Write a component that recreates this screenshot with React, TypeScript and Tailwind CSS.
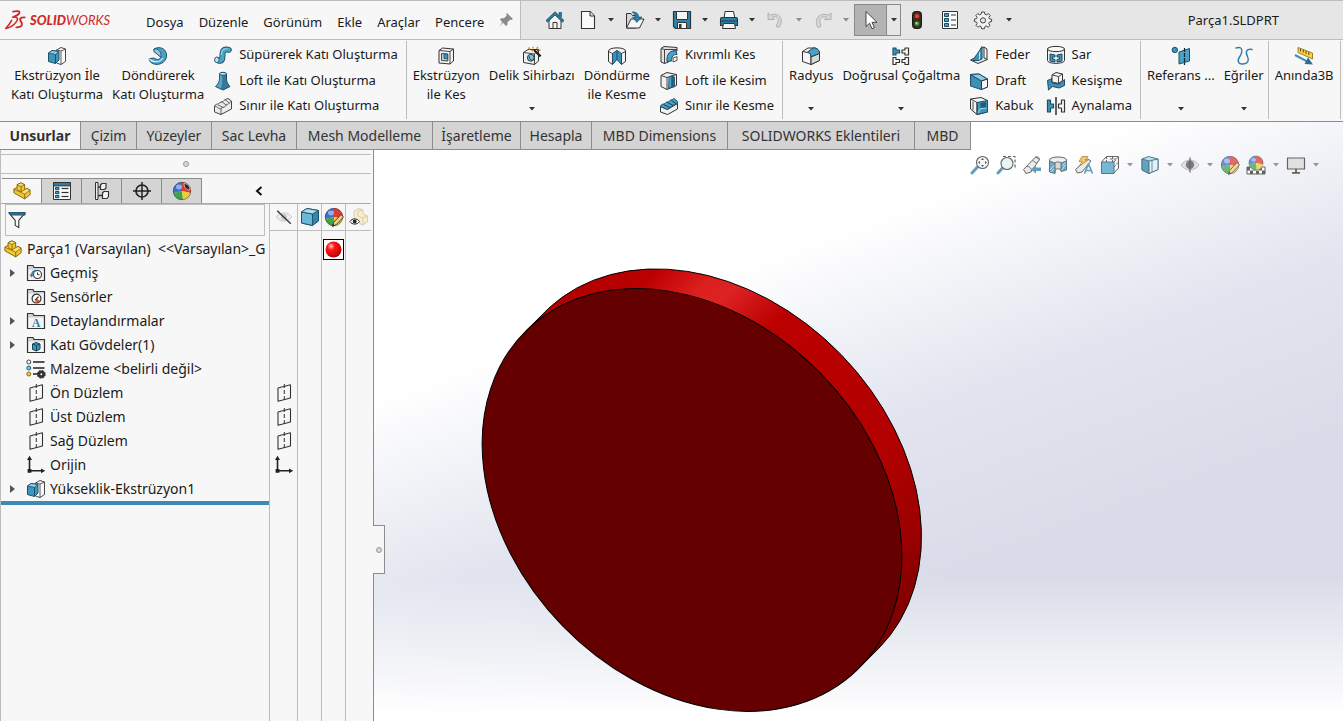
import React from "react";
import { clsx } from "clsx";

type IconType = React.FC;

const Svg: React.FC<{ children: React.ReactNode; className?: string }> = ({ children, className = "size-5" }) => (
  <svg viewBox="0 0 20 20" fill="none" stroke="#333" strokeLinejoin="round" className={clsx("shrink-0", className)} aria-hidden="true">
    {children}
  </svg>
);

const Caret: React.FC<{ className?: string }> = ({ className = "text-[#333]" }) => (
  <svg viewBox="0 0 6 4" className={clsx("w-1.5 h-1 shrink-0", className)} aria-hidden="true">
    <path d="M0 0H6L3 3.5Z" fill="currentColor" />
  </svg>
);

// ---------- Logo ----------
const Logo = () => (
  <div className="flex items-center gap-1 text-[#cf2a27]">
    <svg viewBox="0 0 21 20" fill="none" stroke="currentColor" strokeLinecap="round" className="w-[21px] h-5" aria-hidden="true">
      <path d="M8 1.6C11 .8 15.5.6 14.4 3C13.4 5 11 5.9 9 6.6" strokeWidth="1.7" />
      <path d="M7.5 7.2C12.5 6.6 13.6 8.4 11.4 11.6C8.8 15.3 4.6 17.8.9 18.4C3.4 15.8 5.2 13 6.6 10.4" strokeWidth="1.6" />
      <path d="M19.6 7.4C15.6 7.2 14.2 8.6 15.6 10.9C17.8 14 18.2 17 11.4 17.4" strokeWidth="1.9" />
    </svg>
    <span className="font-['Lato'] italic text-[13px] leading-5">
      <b className="font-black">SOLID</b>
      <span className="font-normal">WORKS</span>
    </span>
  </div>
);

// ---------- Quick access icons ----------
const HomeIcon = () => (
  <Svg>
    <path d="M4 10V18.5H16V10L10 4Z" fill="#f4f4f4" />
    <path d="M8 18.5V12.5H12V18.5" />
    <path d="M14 2.5H16.5V7L14 5Z" fill="#2b7ea6" stroke="#1d4e66" strokeWidth=".7" />
    <path d="M1 10.6L10 1.8L19 10.6L17.4 12L10 5L2.6 12Z" fill="#2b7ea6" stroke="#173f54" strokeWidth=".8" />
  </Svg>
);

const NewIcon = () => (
  <Svg>
    <path d="M3.5 1.5H12L16.5 6V18.5H3.5Z" fill="#fafafa" strokeWidth="1.1" />
    <path d="M12 1.5V6H16.5" fill="#ddd" />
  </Svg>
);

const OpenIcon = () => (
  <Svg>
    <path d="M1.5 18V3.5H6L7.5 5.5H11V18Z" fill="#d7d7d7" />
    <path d="M1.5 18L6 9H19L14.5 18Z" fill="#f6f6f6" />
    <path d="M7 2C11 1.6 13.6 3.6 13.8 7H17L11.8 12.5L7.6 7H10.4C10.3 5 9.2 3.2 7 2Z" fill="#2b7ea6" stroke="#174a63" strokeWidth=".6" />
  </Svg>
);

const SaveIcon = () => (
  <Svg>
    <path d="M1.5 1.5H18.5V18.5H3.5L1.5 16.5Z" fill="#2b84ad" strokeWidth="1.2" />
    <path d="M4.5 1.5H15.5V9.5H4.5Z" fill="#f4f4f4" />
    <path d="M5.5 12.5H14.5V18.5H5.5Z" fill="#f4f4f4" />
    <path d="M7 14H9.5V18H7Z" fill="#333" stroke="none" />
  </Svg>
);

const PrintIcon = () => (
  <Svg>
    <path d="M5 9L6 1.5H14.5L16 9Z" fill="#fafafa" />
    <path d="M1.5 9Q1.5 7.5 3 7.5H17Q18.5 7.5 18.5 9V15.5H1.5Z" fill="#2b7ea6" strokeWidth="1.1" />
    <path d="M2 11H18" stroke="#173f54" />
    <path d="M4.5 13.5H15.5L16.5 18.5H3.5Z" fill="#f4f4f4" />
  </Svg>
);

const UndoIcon = () => (
  <Svg>
    <path d="M2 3V9.5H8.5L6.4 7.4C10 5.4 14 8 11.6 13L10 16.5L13 17.5C19 9.5 13 1.5 4.4 5.2Z" fill="#d6d6d6" stroke="#ababab" strokeWidth=".9" />
  </Svg>
);

const RedoIcon = () => (
  <Svg>
    <path d="M18 3V9.5H11.5L13.6 7.4C10 5.4 6 8 7 13L8 16.5L5 17.5C0 9.5 7 1.5 15.6 5.2Z" fill="#d6d6d6" stroke="#ababab" strokeWidth=".9" />
  </Svg>
);

const CursorIcon = () => (
  <Svg>
    <path d="M5 1.5V16.5L8.6 13.2L11 18.7L13.4 17.6L11 12.3H16Z" fill="#fff" strokeWidth=".9" />
  </Svg>
);

const TrafficIcon = () => (
  <Svg>
    <rect x="5.5" y="1.5" width="9" height="17" rx="3" fill="#2f2f24" stroke="#161616" />
    <circle cx="10" cy="6.2" r="2.7" fill="#e0402a" stroke="#6e1a10" />
    <circle cx="10" cy="13.6" r="2.7" fill="#4f9d3a" stroke="#1f4a15" />
    <circle cx="9.4" cy="13" r=".9" fill="#b6e59f" stroke="none" />
  </Svg>
);

const ListIcon = () => (
  <Svg>
    <rect x="2.5" y="1.5" width="15" height="17" fill="#fafafa" />
    {[3.5, 8.5, 13.5].map((y) => (
      <g key={y}>
        <rect x="4.5" y={y} width="4" height="3" fill="#4aa3c7" stroke="#174a63" />
        <path d={`M11 ${y + 1.5}H16`} />
      </g>
    ))}
  </Svg>
);

const GearIcon = () => (
  <Svg>
    <path
      d="M8.6 2H11.4L11.9 4.2L13.4 4.9L15.3 3.6L17.2 5.5L15.9 7.4L16.4 8.8L18.6 9.3V11.6L16.4 12.1L15.8 13.5L17 15.4L15.2 17.2L13.3 16L11.9 16.6L11.4 18.7H8.6L8.1 16.6L6.7 16L4.8 17.2L3 15.4L4.2 13.5L3.6 12.1L1.4 11.6V9.2L3.6 8.7L4.2 7.4L2.9 5.5L4.8 3.6L6.7 4.9L8.1 4.2Z"
      fill="#f2f2f2"
      stroke="#444"
    />
    <circle cx="10" cy="10.4" r="2.6" fill="#e6e6e6" stroke="#444" />
  </Svg>
);

const PinIcon = () => (
  <svg viewBox="0 0 16 16" className="size-4 shrink-0" aria-hidden="true">
    <path d="M9 1L15 7L13.6 8L12.4 7.4L9.6 10L9.4 13L8 14L5 10.8L1 14.8L4.2 10.2L2 7.4L3.2 6.2L6 6.3L8.8 3.6L8.2 2.2Z" fill="#8b8b8b" />
  </svg>
);

// ---------- Ribbon icons ----------
const ExtrudeIcon = () => (
  <Svg>
    <path d="M9.5 4L14 1.5L18.5 3V15.5L14 18.5L9.5 17Z" fill="#fafafa" strokeWidth=".9" />
    <path d="M14 18.5V5L18.5 3M14 5L9.5 4" strokeWidth=".8" />
    <path d="M1.5 7L5 4.5L12 5.5V14L8.5 17.5L1.5 15.5Z" fill="#3c97bf" stroke="#1d4e66" />
    <path d="M1.5 7L8.5 8.5L12 5.5L5 4.5Z" fill="#8fcbe2" stroke="#1d4e66" strokeWidth=".8" />
    <path d="M8.5 8.5V17.5" stroke="#1d4e66" />
  </Svg>
);

const RevolveIcon = () => (
  <Svg>
    <path d="M6 3C12-.5 19 3 18.5 10C18 17.5 9 20.5 3.5 16.8C1.6 15.5 1 14 1.2 12.6L6.5 12C8 14 11.5 14 13 11.2L6 5.5Z" fill="#4aa3c7" stroke="#1d4e66" />
    <path d="M6 3C10 2.5 13.5 5 13 11.2L6 5.5Z" fill="#8fcbe2" stroke="#1d4e66" strokeWidth=".8" />
    <path d="M1.2 12.6C4 16.4 11 17.4 15 12" stroke="#d9f0f9" strokeWidth="1.1" />
  </Svg>
);

const SweepIcon = () => (
  <Svg>
    <path d="M4.5 15C9.5 17.5 9.5 13.5 9.5 10C9.5 5 11.5 3.8 15.8 4.8" stroke="#1d4e66" strokeWidth="6" strokeLinecap="round" />
    <path d="M4.5 15C9.5 17.5 9.5 13.5 9.5 10C9.5 5 11.5 3.8 15.8 4.8" stroke="#4aa3c7" strokeWidth="4.2" strokeLinecap="round" />
    <path d="M8.4 10C8 5.5 10 3.4 14.6 3.8" stroke="#9bd3e8" strokeWidth="1.2" />
    <ellipse cx="3.8" cy="14.8" rx="2.2" ry="2.8" fill="#bfe3f0" stroke="#1d4e66" strokeWidth=".8" />
  </Svg>
);

const LoftIcon = () => (
  <Svg>
    <path d="M6.5 2.5V8C6.5 11.5 4 14 2.5 15.5L10 19L17 15.5C15.5 14 13.5 11.5 13.5 8V2.5Z" fill="#35799c" stroke="#1d4e66" />
    <path d="M6.8 3V8C6.8 12 4.5 14 3 15.3L8 17.6C9.3 13 9.5 8 9.4 3Z" fill="#5ca5c6" stroke="none" />
    <ellipse cx="10" cy="2.8" rx="3.5" ry="1.5" fill="#bfe3f0" stroke="#1d4e66" />
  </Svg>
);

const BoundaryIcon = () => (
  <Svg>
    <path d="M1.5 10.5C2 7.5 5 8.5 6 7.5C7 6 9 6 10 5.5C11 4 12.5 3.5 15 2.5L18.5 5V13L8 18.5L1.5 16Z" fill="#ececec" stroke="#444" />
    <path d="M1.5 10.5C4 9.5 5 13 8 13C8.5 10.5 11 12 12 10.5C13 8 15.5 9 18.5 5M8 13V18.5M5 9L10.5 11.5M9 6L14 9.5M12.5 4L16.5 7" stroke="#555" strokeWidth=".9" />
  </Svg>
);

const ExtrudeCutIcon = () => (
  <Svg>
    <path d="M3 4.5L6.5 2L17.5 3V15L14 18L3 17Z" fill="#f3f3f3" />
    <path d="M3 4.5L14 5.5V18M14 5.5L17.5 3" strokeWidth=".9" />
    <path d="M5.5 7.5L11.8 8V15L5.5 14.5Z" fill="#cfcfcf" strokeWidth=".9" />
    <path d="M8 7.9L11.6 8.2V12.8L8 12.5Z" fill="#3c97bf" stroke="#1d4e66" strokeWidth=".8" />
  </Svg>
);

const HoleWizardIcon = () => (
  <Svg>
    <path d="M1.5 6.5L6 3.5H16.5V15L12.5 18.5L1.5 16.5Z" fill="#f0f0f0" />
    <path d="M1.5 6.5L12.5 8V18.5M12.5 8L16.5 3.5" strokeWidth=".9" />
    <circle cx="8.8" cy="11.8" r="3.4" fill="#7cc3de" />
    <path d="M7.4 10.2A3 3 0 0 0 11 14" stroke="#1d4e66" />
    <path d="M12 4L18.6 10.4" stroke="#222" strokeWidth="2.4" />
    <path d="M6.5 1.5L8 3.5M11 .8V2.6M16 1L14.6 2.8M18.6 3.6L16.8 4.6M9.5 5.2L11 4.4" stroke="#e2902c" strokeWidth="1.5" />
  </Svg>
);

const RevolveCutIcon = () => (
  <Svg>
    <path d="M1.5 5C1.5.8 18.5.8 18.5 5V15.5L14.5 18.5H5.5L1.5 15.5Z" fill="#f3f3f3" stroke="none" />
    <path d="M5.5 18.5L1.5 15.5V5C1.5.8 18.5.8 18.5 5V15.5L14.5 18.5" />
    <path d="M5.5 18.5V7.5L10 4.5L14.5 7.5V18.5L10 13.5Z" fill="#3c8fb5" stroke="#1d4e66" />
    <path d="M10 4.5V13.5" stroke="#1d4e66" />
    <path d="M1.5 5.5L5.5 7.5M18.5 5.5L14.5 7.5" strokeWidth=".9" />
  </Svg>
);

const SweptCutIcon = () => (
  <Svg>
    <path d="M2 3.5L5 1.5L18 2.5V6H15C11 7 10 11 9.5 17L5.5 18.5L2 17Z" fill="#e2e2e2" />
    <path d="M2 3.5L5.5 4.5V18.5M5.5 4.5L18 4.5" strokeWidth=".9" />
    <path d="M8 16.5C7.5 9 11 5 17 6L18 9.5C14 9 12.5 12 12.5 16Z" fill="#4aa3c7" stroke="#1d4e66" />
    <path d="M14 13L18 11.5V15.5L14 17Z" fill="#f0f0f0" strokeWidth=".8" />
  </Svg>
);

const LoftCutIcon = () => (
  <Svg>
    <path d="M2 4.5L8 1.5L17.5 3.5V14.5L8 18.5L2 15.5Z" fill="#f0f0f0" />
    <path d="M2 4.5L8 6.5V18.5M8 6.5L17.5 3.5" strokeWidth=".9" />
    <path d="M10 6L13 4.8V15.8L9.5 17.5Z" fill="#4aa3c7" stroke="#1d4e66" strokeWidth=".8" />
    <path d="M13 4.8L15.5 6V16L13 15.8Z" fill="#24678a" stroke="#1d4e66" strokeWidth=".8" />
  </Svg>
);

const BoundaryCutIcon = () => (
  <Svg>
    <path d="M1.5 10.5L8.5 13.5L18.5 7.5V13L8.5 18.5L1.5 16Z" fill="#f3f3f3" />
    <path d="M1.5 10.5C2 7.5 5 8.5 6 7.5C7 5.5 9 6.5 10 5.5C11 3.5 13 4.5 15 2.5L18.5 5.5V7.5C15.5 9 14 8.5 12.5 10.5C11 12.5 9.5 11 8.5 13.5Z" fill="#4aa3c7" stroke="#1d4e66" />
    <path d="M4.5 8.5L11 11.5M8.5 6.5L14 9.5M12.5 4.5L17 7.5" stroke="#14425a" />
  </Svg>
);

const FilletIcon = () => (
  <Svg>
    <path d="M1.5 5.5L7 2H14C17 2.5 18.5 5 18.5 8V14.5L10 18.5L1.5 15.5Z" fill="#f6f6f6" />
    <path d="M10 18.5V11C10 8.5 9 6.5 6.5 6.5L1.5 5.5" />
    <path d="M6.5 6L12 2H14C17 2.5 18.5 5 18.5 7.5L10 11C10 8.5 9 6.5 6.5 6Z" fill="#4aa3c7" stroke="#1d4e66" />
    <path d="M10 11L18.5 7.5V14.5L10 18.5Z" fill="#d8d8d8" />
  </Svg>
);

// Each part is a small plate with a tab pointing to the right
const PatternIcon = () => (
  <Svg>
    <path d="M2 2H5V4H8.5V7H5V9H2Z" fill="#3c97bf" stroke="#1d4e66" strokeWidth="1.2" />
    <path d="M11 4H14V2H17.5V9H14V7H11Z" fill="#f8f8f8" strokeWidth="1.2" />
    <path d="M2 11.5H5V13.5H8.5V16.5H5V18.5H2Z" fill="#f8f8f8" strokeWidth="1.2" />
    <path d="M11 13.5H14V11.5H17.5V18.5H14V16.5H11Z" fill="#f8f8f8" strokeWidth="1.2" />
  </Svg>
);

const RibIcon = () => (
  <Svg>
    <path d="M11.5 4L15 2V13L18.5 14.5L9 18.5L1.5 15L11 10.5Z" fill="#e6e6e6" />
    <path d="M13 1.5V14L9.5 15.5H3.5C5.5 12.5 9.5 7.5 13 1.5Z" fill="#3c8fb5" stroke="#1d4e66" />
    <path d="M10.5 7V14.5" stroke="#bfe3f0" />
    <path d="M15 2L18 4V14" />
  </Svg>
);

const DraftIcon = () => (
  <Svg>
    <path d="M1.5 3.5L10 3L18.5 8V16L12 18.5L1.5 15Z" fill="#3c8fb5" stroke="#1d4e66" />
    <path d="M1.5 3.5L10 3L18.5 8L12.5 10Z" fill="#8fcbe2" stroke="#1d4e66" />
    <path d="M12.5 10L18.5 8V16L12.5 18.5Z" fill="#f4f4f4" />
  </Svg>
);

const ShellIcon = () => (
  <Svg>
    <path d="M1.5 3L12 1.5L18.5 4.5V16L8 18.5L1.5 13Z" fill="#f4f4f4" />
    <path d="M8 6.5L18.5 4.5V16L8 18.5Z" fill="#3c97bf" stroke="#1d4e66" />
    <path d="M11.5 7L17 6V12L11.5 12.5Z" fill="#1f5c7c" stroke="none" />
    <path d="M8.5 17.5L11.5 12.5L17.5 12" stroke="#bfe3f0" strokeWidth=".9" />
    <path d="M1.5 3L8 6.5V18.5M4 5.5V14" strokeWidth=".9" />
  </Svg>
);

const WrapIcon = () => (
  <Svg>
    <path d="M1.5 4V15.5C1.5 19.3 18.5 19.3 18.5 15.5V4Z" fill="#f0f0f0" />
    <ellipse cx="10" cy="4" rx="8.5" ry="2.6" fill="#fafafa" />
    <path d="M4 9L9 10V12H6.5V14L9 14.4V17L4 16Z" fill="#3c8fb5" stroke="#1d4e66" />
    <path d="M11 10L16 9V16L11 17V14.4L13.5 14V12L11 12Z" fill="#3c8fb5" stroke="#1d4e66" />
  </Svg>
);

const IntersectIcon = () => (
  <Svg>
    <path d="M1.5 9.5L6 7.5V12L13 13L18.5 8.5V14.5L13 17L6.5 15.5L2.5 19Z" fill="#3c8fb5" stroke="#1d4e66" />
    <path d="M6 4L10 1.5L16.5 3V9.5L12.5 12.5L6 11Z" fill="#f4f4f4" />
    <path d="M6 4L12.5 5.5V12.5M12.5 5.5L16.5 3" strokeWidth=".9" />
  </Svg>
);

const MirrorIcon = () => (
  <Svg>
    <path d="M1.5 4H4.5V8H7.5V12H4.5V16H1.5Z" fill="#3c97bf" stroke="#1d4e66" strokeWidth="1.2" />
    <path d="M18.5 4H15.5V8H12.5V12H15.5V16H18.5Z" fill="#f8f8f8" strokeWidth="1.2" />
    <path d="M10 1V19" stroke="#222" strokeWidth="1.4" />
  </Svg>
);

const ReferenceIcon = () => (
  <Svg>
    <circle cx="3.8" cy="4" r="2.7" fill="#3c97bf" stroke="#1d4e66" />
    <path d="M8 6L18.5 2.5V15L8 18Z" fill="#4aa3c7" stroke="#1d4e66" />
    <path d="M13.5 2V19" stroke="#123" strokeWidth="1.2" strokeDasharray="4 1" />
  </Svg>
);

const CurvesIcon = () => (
  <Svg>
    <path d="M2 2C9-.5 9 6 5.5 11C2.5 15.5 5 18.5 9 18C14 17.5 15.5 14.5 13.5 10.5C11 6 12.5 2.5 18 3.5" stroke="#2f7ea8" strokeWidth="1.4" strokeLinecap="round" />
  </Svg>
);

const InstantIcon = () => (
  <Svg>
    <path d="M4 1.5L18.5 7V13L4 6.5Z" fill="#f7d14c" stroke="#8a6a10" strokeWidth=".8" />
    <path d="M6.5 2.8V5.5M9.3 3.8V6.5M12 5V7.8M14.8 6.2V9" stroke="#5f480a" />
    <path d="M1 9L13 15.4" stroke="#3c8fb5" strokeWidth="2.2" />
    <path d="M14 11.5L19 18.5L10.5 18Z" fill="#2b6f94" stroke="none" />
  </Svg>
);

// ---------- Feature tree icons ----------
const PartIcon = () => (
  <Svg className="size-[18px]">
    <path d="M1 8L4.5 6.2V3L8.5 1L13 3V8.5L15.5 7.2L19 9V14L13 18.8L1 12Z" fill="#f5c52c" stroke="#7a5b0b" />
    <path d="M4.5 3L8.5 1L13 3L9 5Z M1 8L4.5 6.2V8.5L9 11L13 8.5L15.5 7.2L19 9L13 13.5Z" fill="#fbe07c" stroke="#7a5b0b" strokeWidth=".8" />
    <path d="M9 5V11M13 13.5V18.8" stroke="#7a5b0b" strokeWidth=".9" />
  </Svg>
);

const PropertyIcon = () => (
  <Svg>
    <rect x="1.5" y="1.5" width="17" height="17" fill="#fafafa" />
    <rect x="1.5" y="1.5" width="17" height="3.4" fill="#2b7ea6" />
    {[6.5, 10.5, 14.5].map((y) => (
      <g key={y}>
        <rect x="3.5" y={y} width="3.4" height="2.2" fill="#4aa3c7" stroke="#174a63" />
        <path d={`M9.5 ${y + 1}H16.5`} strokeWidth="1.2" />
      </g>
    ))}
  </Svg>
);

const ConfigIcon = () => (
  <Svg>
    <path d="M3.5 1.5H6V18.5H3.5Z" fill="#eee" />
    <path d="M6 6H8.5M6 14.5H10.5" strokeWidth="1.3" />
    <path d="M8.5 4L10 2.5H14V7L12.5 8.5H8.5Z" fill="#f4f4f4" strokeWidth="1.2" />
    <path d="M10.5 12L12 10.5H16.5V15.5L15 17.5H10.5Z" fill="#f4f4f4" strokeWidth="1.2" />
  </Svg>
);

const TargetIcon = () => (
  <Svg>
    <circle cx="10" cy="10" r="6" stroke="#222" strokeWidth="1.7" />
    <path d="M10 1V19M1 10H19" stroke="#222" strokeWidth="1.5" />
  </Svg>
);

const BallShape = () => (
  <g stroke="none">
    <path d="M10 10V1A9 9 0 0 0 1.2 12Z" fill="#3b6fd0" />
    <path d="M10 10V1A9 9 0 0 1 18.8 12Z" fill="#dd3c33" />
    <path d="M10 10L1.2 12A9 9 0 0 0 11 19Z" fill="#3fa548" />
    <path d="M10 10L18.8 12A9 9 0 0 1 11 19Z" fill="#f2cd3a" />
    <ellipse cx="7" cy="6" rx="3" ry="2.4" fill="#fff" opacity=".45" />
    <circle cx="10" cy="10" r="8.7" fill="none" stroke="#444" strokeWidth=".6" />
  </g>
);

const DisplayIcon = () => (
  <Svg>
    <BallShape />
    <path d="M12 2.5C16 3 18 6 18 9C15 9 12 6.5 12 2.5Z" fill="#222" stroke="#fff" strokeWidth=".6" />
  </Svg>
);

const AppearanceIcon = () => (
  <Svg>
    <BallShape />
    <path d="M17 7.5L19.5 10L12 17.8L8.6 19.2L9.6 15.6Z" fill="#f3d08a" strokeWidth=".9" />
    <path d="M8.6 19.2L9.2 17.2L10.5 18.5Z" fill="#222" />
  </Svg>
);

const FilterIcon = () => (
  <Svg className="size-[18px]">
    <path d="M1 2H19L12 10.5V18.5L8 16V10.5Z" fill="#fafafa" strokeWidth="1.2" />
    <path d="M1 2H19V4.5H3Z" fill="#2b7ea6" stroke="#1d4e66" />
  </Svg>
);

const EyeOffIcon = () => (
  <Svg className="size-[18px]">
    <path d="M1.5 10C5 4 15 4 18.5 10C15 16 5 16 1.5 10Z" fill="#eee" stroke="#c2c2c2" />
    <circle cx="10" cy="10" r="3.4" fill="#c8c8c8" stroke="none" />
    <path d="M2.5 3L17.5 17.5" strokeWidth="1.5" />
  </Svg>
);

const CubeIcon = () => (
  <Svg>
    <path d="M1.5 5L7 1.5L18.5 3.5V14L12.5 18.5L1.5 16Z" fill="#2f86ae" stroke="#1d4e66" />
    <path d="M1.5 5L12.5 7V18.5L1.5 16Z" fill="#6bb8d6" stroke="#1d4e66" strokeWidth=".9" />
    <path d="M1.5 5L7 1.5L18.5 3.5L12.5 7Z" fill="#b0dcec" stroke="#1d4e66" strokeWidth=".9" />
  </Svg>
);

const PartEyeIcon = () => (
  <Svg>
    <path d="M5 4L10 1.5L14 3V7L18.5 9V15L13 18L5 12Z" fill="#f6edcf" stroke="#d8cda6" />
    <path d="M9 4.5V9L14 11V18M14 11L18.5 9M9 4.5L14 3" stroke="#d8cda6" />
    <path d="M.8 14.5C3.5 11 8 11 10.5 14.5C8 18 3.5 18 .8 14.5Z" fill="#fff" stroke="#222" />
    <circle cx="5.7" cy="14.5" r="1.9" fill="#222" stroke="none" />
  </Svg>
);

const Folder: React.FC<{ children: React.ReactNode }> = ({ children }) => (
  <Svg>
    <path d="M1.5 17.5V2.5H7L8 4.5H18.5V17.5Z" fill="#d0d0d0" strokeWidth="1.2" />
    <path d="M2.5 6.5H17.5V17H2.5Z" fill="#f4f4f4" stroke="none" />
    {children}
  </Svg>
);

const HistoryIcon = () => (
  <Folder>
    <circle cx="11.5" cy="11.5" r="4" fill="#fff" strokeWidth="1.1" />
    <path d="M11.5 9.5V11.7H13.5" />
    <path d="M3.5 11.5L5.5 14.5L8 11.5Z" fill="#2b7ea6" stroke="none" />
    <path d="M5.6 12C6 9 8 7.5 10.5 7.5" stroke="#2b7ea6" strokeWidth="1.4" />
  </Folder>
);

const SensorIcon = () => (
  <Folder>
    <circle cx="10.5" cy="11.6" r="4.4" fill="#fff" strokeWidth="1.2" />
    <path d="M10.5 11.6L14 13.8A4 4 0 0 1 9.4 15.4Z" fill="#e0532e" stroke="none" />
    <path d="M9 13.4L12.5 9.6" strokeWidth="1.4" />
  </Folder>
);

const AnnotationIcon = () => (
  <Folder>
    <text x="10" y="16" textAnchor="middle" fill="#2b7ea6" stroke="none" fontSize="12" fontWeight="700" fontFamily="Liberation Serif, serif">
      A
    </text>
  </Folder>
);

const BodiesIcon = () => (
  <Folder>
    <path d="M6.5 9L10 7.5L14 9V14L10.5 16L6.5 14.5Z" fill="#3c97bf" stroke="#14425a" />
    <path d="M6.5 9L10.5 10.5V16M10.5 10.5L14 9" stroke="#14425a" />
  </Folder>
);

const MaterialIcon = () => (
  <Svg>
    <path d="M7 3H18.5M7 9H18.5M7 15H12" stroke="#222" strokeWidth="1.7" />
    <circle cx="2.8" cy="3" r="2" fill="#f6f6f6" strokeWidth=".9" />
    <circle cx="2.8" cy="9" r="2" fill="#7cc3de" stroke="#1d4e66" strokeWidth=".9" />
    <circle cx="2.8" cy="15" r="2" fill="#f0cb3a" stroke="#7a5b0b" strokeWidth=".9" />
    <circle cx="15.3" cy="15.3" r="2.4" stroke="#333" strokeWidth="2.8" />
    <circle cx="15.3" cy="15.3" r="4" stroke="#333" strokeDasharray="1.8 1.34" />
  </Svg>
);

const PlaneIcon = () => (
  <Svg>
    <path d="M4 5L16.5 1.8V15L4 18.2Z" strokeWidth="1.1" />
    <path d="M10.3 1V19" strokeDasharray="4 2" />
  </Svg>
);

const OriginIcon = () => (
  <Svg>
    <path d="M3.5 4V15.8H15" stroke="#222" strokeWidth="1.6" />
    <path d="M3.5 .8L6 5H1Z M19.2 15.8L15 13.4V18.2Z M1.6 14H5.4V17.8H1.6Z" fill="#222" stroke="none" />
  </Svg>
);

// ---------- Heads-up view icons ----------
const ZoomFitIcon = () => (
  <Svg>
    <path d="M2 18L7.5 12" stroke="#2f7ea8" strokeWidth="3" strokeLinecap="round" />
    <circle cx="12.5" cy="7.5" r="6" fill="#eef5f8" strokeWidth="1.1" />
    <path d="M12.5 3L14 5H11Z M12.5 12L14 10H11Z M8 7.5L10 6V9Z M17 7.5L15 6V9Z" fill="#222" stroke="none" />
  </Svg>
);

const ZoomAreaIcon = () => (
  <Svg>
    <path d="M7 1.5H19V13.5" strokeDasharray="3 2" strokeWidth="1.2" />
    <path d="M2 18L6.5 13" stroke="#2f7ea8" strokeWidth="3" strokeLinecap="round" />
    <circle cx="11" cy="8.5" r="6" fill="#e2f0f6" strokeWidth="1.1" />
  </Svg>
);

const PrevViewIcon = () => (
  <Svg>
    <path d="M13.5 2L17.5 4.5L9 17L4 18.5L1.5 14.5Z" fill="#e4e4e4" />
    <path d="M10.5 5.5L15 8.5M13.5 2C15 1 18.5 3 17.5 4.5M4 11.5C7 11 9.5 13 9.5 16" strokeWidth=".9" />
    <path d="M19 12.5H14V10L9 14.5L14 18.5V16H19Z" fill="#2f7ea8" stroke="none" />
  </Svg>
);

const SectionIcon = () => (
  <Svg>
    <path d="M1.5 5C1.5 1 18.5 1 18.5 5V14L13 16V8H7V18L1.5 15.5Z" fill="#e9e9e9" />
    <path d="M1.5 6L7 8V18.5L1.5 17ZM13 8L18.5 6V15L13 16.5Z" fill="#3c8fb5" stroke="#1d4e66" />
    <path d="M2 15L6.5 10M3 17L6.5 13.5M13.5 15L18 9.5M13.5 11.5L17 7.5" stroke="#bfe3f0" strokeWidth=".9" />
    <path d="M7 8C8 6.5 12 6.5 13 8V14L7 14Z" fill="#cfcfcf" strokeWidth=".9" />
  </Svg>
);

const DynamicIcon = () => (
  <Svg>
    <path d="M13.5 4L17 6L8 17L3.5 18L1.5 14.5Z" fill="#e4e4e4" />
    <path d="M8 1.5H14L11 5H14L5.5 11L8 6.5H5Z" fill="#f5b731" stroke="#8d5f0c" strokeWidth=".8" />
    <path d="M10.5 18.5L14.5 9L18.5 18.5M12 15.5H17" stroke="#2f7ea8" strokeWidth="1.7" />
  </Svg>
);

const OrientationIcon = () => (
  <Svg>
    <path d="M1.5 7L6.5 1.5H18.5V13L14 18" fill="#f8f8f8" />
    <path d="M6.5 1.5V7M14 7L18.5 1.5M10 4H17M12.5 1.5V7M14 12L18.5 7" strokeDasharray="2.5 1" />
    <rect x="1.5" y="7" width="12.5" height="11.5" fill="#4aa3c7" stroke="#1d4e66" />
  </Svg>
);

const StyleIcon = () => (
  <Svg>
    <path d="M2 4L8.5 1.5L18 4V14.5L9 18.5L2 15Z" fill="#a8d6e8" stroke="#1d4e66" />
    <path d="M2 4L9 6V18.5L2 15Z" fill="#2f86ae" stroke="#1d4e66" />
    <path d="M9 6L18 4V14.5L9 18.5Z" fill="#dceff6" stroke="#1d4e66" />
    <path d="M12 5.5V17" stroke="#1d4e66" strokeWidth=".8" />
  </Svg>
);

const EyeIcon = () => (
  <Svg>
    <path d="M1 10C5 3.5 15 3.5 19 10C15 16.5 5 16.5 1 10Z" fill="#dcdcdc" stroke="#a8a8a8" />
    <circle cx="10" cy="9.8" r="4.2" fill="#555" stroke="none" />
    <path d="M10 2.5V17.5" strokeWidth="1.2" />
  </Svg>
);

const SceneIcon = () => (
  <Svg>
    <rect x="1" y="12" width="18" height="7" fill="#fff" />
    <path d="M1 12H4V15.5H7V12H10V15.5H13V12H16V15.5H19V19H16V15.5H13V19H10V15.5H7V19H4V15.5H1Z" fill="#333" stroke="none" />
    <svg x="2" y="0" width="16" height="16" viewBox="0 0 20 20">
      <BallShape />
    </svg>
  </Svg>
);

const MonitorIcon = () => (
  <Svg>
    <rect x="1.5" y="3" width="17" height="11" fill="#dcdcdc" strokeWidth="1.2" />
    <path d="M10 14V17.5M6 17.8H14" strokeWidth="1.8" />
  </Svg>
);

// ---------- Data ----------
const menus = ["Dosya", "Düzenle", "Görünüm", "Ekle", "Araçlar", "Pencere"];

const quickTools: { label: string; icon: IconType; off?: boolean }[] = [
  { label: "Yeni", icon: NewIcon },
  { label: "Aç", icon: OpenIcon },
  { label: "Kaydet", icon: SaveIcon },
  { label: "Yazdır", icon: PrintIcon },
  { label: "Geri Al", icon: UndoIcon, off: true },
  { label: "Yinele", icon: RedoIcon, off: true },
];

const tabs = [
  { label: "Unsurlar", width: "w-[81px]" },
  { label: "Çizim", width: "w-14" },
  { label: "Yüzeyler", width: "w-[75px]" },
  { label: "Sac Levha", width: "w-[85px]" },
  { label: "Mesh Modelleme", width: "w-[136px]" },
  { label: "İşaretleme", width: "w-[88px]" },
  { label: "Hesapla", width: "w-[71px]" },
  { label: "MBD Dimensions", width: "w-[136px]" },
  { label: "SOLIDWORKS Eklentileri", width: "w-[187px]" },
  { label: "MBD", width: "w-14" },
];

const panelTabs: { label: string; icon: IconType }[] = [
  { label: "Unsur Ağacı", icon: PartIcon },
  { label: "Özellikler", icon: PropertyIcon },
  { label: "Konfigürasyonlar", icon: ConfigIcon },
  { label: "Ölçümlendirme", icon: TargetIcon },
  { label: "Görüntü", icon: DisplayIcon },
];

const tree: { label: string; icon: IconType; open?: boolean }[] = [
  { label: "Geçmiş", icon: HistoryIcon, open: true },
  { label: "Sensörler", icon: SensorIcon },
  { label: "Detaylandırmalar", icon: AnnotationIcon, open: true },
  { label: "Katı Gövdeler(1)", icon: BodiesIcon, open: true },
  { label: "Malzeme <belirli değil>", icon: MaterialIcon },
  { label: "Ön Düzlem", icon: PlaneIcon },
  { label: "Üst Düzlem", icon: PlaneIcon },
  { label: "Sağ Düzlem", icon: PlaneIcon },
  { label: "Orijin", icon: OriginIcon },
  { label: "Yükseklik-Ekstrüzyon1", icon: ExtrudeIcon, open: true },
];

const viewTools: { label: string; icon: IconType; menu?: boolean }[] = [
  { label: "Ekrana Sığdır", icon: ZoomFitIcon },
  { label: "Alan Yakınlaştır", icon: ZoomAreaIcon },
  { label: "Önceki Görünüm", icon: PrevViewIcon },
  { label: "Kesit Görünümü", icon: SectionIcon },
  { label: "Dinamik Detay", icon: DynamicIcon },
  { label: "Görünüm Yönü", icon: OrientationIcon, menu: true },
  { label: "Görüntü Stili", icon: StyleIcon, menu: true },
  { label: "Gizle/Göster", icon: EyeIcon, menu: true },
  { label: "Görünümü Düzenle", icon: AppearanceIcon },
  { label: "Sahne Uygula", icon: SceneIcon, menu: true },
  { label: "Görünüm Ayarları", icon: MonitorIcon, menu: true },
];

// ---------- Ribbon parts ----------
const BigButton: React.FC<{ icon: IconType; lines: string[]; menu?: boolean }> = ({ icon: Icon, lines, menu }) => (
  <button type="button" className="flex flex-col items-center h-[78px] pt-[5px] whitespace-nowrap leading-[19px]">
    <Icon />
    {lines.map((line) => (
      <span key={line}>{line}</span>
    ))}
    {menu && <Caret className="mt-auto mb-2 text-[#333]" />}
  </button>
);

const SmallColumn: React.FC<{ items: { icon: IconType; label: string }[] }> = ({ items }) => (
  <div className="flex flex-col pt-px">
    {items.map(({ icon: Icon, label }) => (
      <button key={label} type="button" className="flex items-center gap-[6px] h-[26px] whitespace-nowrap">
        <Icon />
        {label}
      </button>
    ))}
  </div>
);

const Group: React.FC<{ children: React.ReactNode; className?: string }> = ({ children, className }) => (
  <div className={clsx("flex h-[78px] border-r border-[#bdbdbd]", className)}>{children}</div>
);

const Header = () => (
  <header className="flex h-10 border-y border-[#bdbdbd] bg-[#e6e6e6] text-[13px]">
    <div className="flex items-center bg-[#f7f7f7] border-r border-[#bdbdbd] pl-[5px] pr-[6px]">
      <Logo />
      <nav className="flex gap-[15px] ml-9 pt-1.5">
        {menus.map((menu) => (
          <button key={menu} type="button">
            {menu}
          </button>
        ))}
      </nav>
      <button type="button" aria-label="Sabitle" className="ml-[14px]">
        <PinIcon />
      </button>
    </div>
    <div className="flex flex-1 items-center pl-6">
      <button type="button" aria-label="Ana Sayfa" className="mr-[13px]">
        <HomeIcon />
      </button>
      {quickTools.map(({ label, icon: Icon, off }) => (
        <div key={label} className={clsx("flex items-center gap-[5px]", label !== "Yinele" && "mr-[6px]")}>
          <button type="button" aria-label={label}>
            <Icon />
          </button>
          <button type="button" aria-label={`${label} menüsü`} className="flex w-4 justify-center">
            <Caret className={off ? "text-[#8a8a8a]" : "text-[#333]"} />
          </button>
        </div>
      ))}
      <div className="flex h-8 border border-[#8a8a8a]">
        <button type="button" aria-label="Seç" className="flex w-8 items-center justify-center bg-[#b3b3b3] border-r border-[#8a8a8a]">
          <CursorIcon />
        </button>
        <button type="button" aria-label="Seç menüsü" className="flex w-[13px] items-center justify-center">
          <Caret />
        </button>
      </div>
      <div className="flex items-center gap-[13px] ml-1.5">
        <button type="button" aria-label="Yeniden Oluştur">
          <TrafficIcon />
        </button>
        <button type="button" aria-label="Dosya Özellikleri">
          <ListIcon />
        </button>
        <button type="button" aria-label="Seçenekler">
          <GearIcon />
        </button>
        <button type="button" aria-label="Seçenekler menüsü">
          <Caret />
        </button>
      </div>
      <span className="ml-auto mr-16 pt-0.5">Parça1.SLDPRT</span>
    </div>
  </header>
);

const Ribbon = () => (
  <div className="flex h-[82px] pt-px bg-[#f7f7f7] border-b border-[#8c8c8c] text-[13px]">
    <Group className="gap-[9px] pl-[11px] pr-2">
      <BigButton icon={ExtrudeIcon} lines={["Ekstrüzyon İle", "Katı Oluşturma"]} />
      <BigButton icon={RevolveIcon} lines={["Döndürerek", "Katı Oluşturma"]} />
      <SmallColumn
        items={[
          { icon: SweepIcon, label: "Süpürerek Katı Oluşturma" },
          { icon: LoftIcon, label: "Loft ile Katı Oluşturma" },
          { icon: BoundaryIcon, label: "Sınır ile Katı Oluşturma" },
        ]}
      />
    </Group>
    <Group className="gap-[9px] pl-[6px] pr-2">
      <BigButton icon={ExtrudeCutIcon} lines={["Ekstrüzyon", "ile Kes"]} />
      <BigButton icon={HoleWizardIcon} lines={["Delik Sihirbazı"]} menu />
      <BigButton icon={RevolveCutIcon} lines={["Döndürme", "ile Kesme"]} />
      <SmallColumn
        items={[
          { icon: SweptCutIcon, label: "Kıvrımlı Kes" },
          { icon: LoftCutIcon, label: "Loft ile Kesim" },
          { icon: BoundaryCutIcon, label: "Sınır ile Kesme" },
        ]}
      />
    </Group>
    <Group className="gap-[9px] pl-[6px] pr-2">
      <BigButton icon={FilletIcon} lines={["Radyus"]} menu />
      <BigButton icon={PatternIcon} lines={["Doğrusal Çoğaltma"]} menu />
      <div className="flex gap-3">
        <SmallColumn
          items={[
            { icon: RibIcon, label: "Feder" },
            { icon: DraftIcon, label: "Draft" },
            { icon: ShellIcon, label: "Kabuk" },
          ]}
        />
        <SmallColumn
          items={[
            { icon: WrapIcon, label: "Sar" },
            { icon: IntersectIcon, label: "Kesişme" },
            { icon: MirrorIcon, label: "Aynalama" },
          ]}
        />
      </div>
    </Group>
    <Group className="gap-[9px] pl-[6px] pr-1">
      <BigButton icon={ReferenceIcon} lines={["Referans ..."]} menu />
      <BigButton icon={CurvesIcon} lines={["Eğriler"]} menu />
    </Group>
    <Group className="px-[6px]">
      <BigButton icon={InstantIcon} lines={["Anında3B"]} />
    </Group>
  </div>
);

const Tabs = () => (
  <nav className="flex w-fit h-7 border-b border-[#8c8c8c] text-sm text-[#333]">
    {tabs.map(({ label, width }, index) => (
      <button key={label} type="button" className={clsx("shrink-0 whitespace-nowrap border-r border-[#8c8c8c]", width, index === 0 ? "bg-[#f7f7f7] font-bold" : "bg-[#d4d4d4]")}>
        {label}
      </button>
    ))}
  </nav>
);

const headCell = "flex h-[27px] items-center justify-center border-b border-[#bdbdbd]";
const rowCell = "flex h-6 items-center justify-center";

const FeaturePanel = () => (
  <aside className="relative flex flex-col w-[374px] shrink-0 bg-[#f7f7f7] border-x border-l-[#bdbdbd] border-r-[#8c8c8c]">
    <div className="flex h-5 mt-1 mr-[2px] items-center justify-center border-y border-[#bdbdbd]">
      <span className="size-1.5 rounded-full border border-[#999] bg-[#d8d8d8]" />
    </div>
    {/* Manager tabs */}
    <div className="flex mt-1 mr-[2px] pl-px border-b border-[#aaa]">
      {panelTabs.map(({ label, icon: Icon }, index) => (
        <button key={label} type="button" aria-label={label} className={clsx("flex w-10 h-[25px] items-center justify-center border-t border-r border-[#8c8c8c]", index > 0 && "bg-[#d4d4d4]")}>
          <Icon />
        </button>
      ))}
      <button type="button" aria-label="Paneli daralt" className="ml-[53px]">
        <svg viewBox="0 0 8 10" className="w-2 h-2.5" fill="none" stroke="#111" strokeWidth="2" aria-hidden="true">
          <path d="M6.5 1L2 5L6.5 9" />
        </svg>
      </button>
    </div>
    <div className="flex flex-1">
      <div className="flex flex-col w-[268px]">
        <label className="flex h-8 mx-1 px-[2px] items-center border border-[#bdbdbd]">
          <FilterIcon />
          <input type="text" aria-label="Ağacı filtrele" className="min-w-0 flex-1 bg-transparent outline-none text-sm" />
        </label>
        <ul className="pt-px text-sm">
          <li className="flex h-6 items-center gap-[5px] pl-[3px] overflow-hidden whitespace-pre">
            <PartIcon />
            {"Parça1 (Varsayılan)  <<Varsayılan>_G"}
          </li>
          {tree.map(({ label, icon: Icon, open }) => (
            <li key={label} className="flex h-6 items-center whitespace-nowrap">
              <span className="flex w-[25px] pl-[9px]">
                {open && (
                  <svg viewBox="0 0 5 8" className="w-[5px] h-2" aria-hidden="true">
                    <path d="M0 0L5 4L0 8Z" fill="#555" />
                  </svg>
                )}
              </span>
              <Icon />
              <span className="ml-1">{label}</span>
            </li>
          ))}
        </ul>
        <div className="h-1 bg-[#4189b5]" />
      </div>
      {/* Display state columns */}
      <div className="w-7 border-l border-[#bdbdbd]">
        <div className={headCell}>
          <EyeOffIcon />
        </div>
        <div className="pt-[150px]">
          {[0, 1, 2].map((n) => (
            <div key={n} className={rowCell}>
              <PlaneIcon />
            </div>
          ))}
          <div className={rowCell}>
            <OriginIcon />
          </div>
        </div>
      </div>
      <div className="w-6 border-l border-[#bdbdbd]">
        <div className={headCell}>
          <CubeIcon />
        </div>
      </div>
      <div className="w-6 border-l border-[#bdbdbd]">
        <div className={headCell}>
          <AppearanceIcon />
        </div>
        <div className="flex justify-center pt-[8px]">
          <svg viewBox="0 0 21 21" className="size-[21px] shrink-0" aria-hidden="true">
            <defs>
              <radialGradient id="swatch" cx=".35" cy=".3" r=".75">
                <stop offset="0" stopColor="#ffc9c9" />
                <stop offset=".3" stopColor="#ff1a1a" />
                <stop offset="1" stopColor="#b80000" />
              </radialGradient>
            </defs>
            <rect x=".5" y=".5" width="20" height="20" fill="#fff" stroke="#000" />
            <circle cx="10.5" cy="10.5" r="8" fill="url(#swatch)" />
          </svg>
        </div>
      </div>
      <div className="w-[26px] border-l border-[#bdbdbd]">
        <div className={headCell}>
          <PartEyeIcon />
        </div>
      </div>
    </div>
    {/* Splitter grip over the viewport */}
    <button type="button" aria-label="Paneli gizle" className="absolute left-[372px] top-[375px] z-10 flex w-3 h-[49px] items-center justify-center bg-[#f7f7f7] border border-l-0 border-[#8c8c8c]">
      <span className="size-1.5 rounded-full border border-[#999] bg-[#d8d8d8]" />
    </button>
  </aside>
);

const Disk = () => (
  <svg viewBox="481 266 444 447" className="w-[444px] h-[447px] mt-[91px] ml-[107px] shrink-0" role="img" aria-label="Parça1">
    <defs>
      <linearGradient id="rim" gradientUnits="userSpaceOnUse" x1="537" y1="320" x2="873" y2="664">
        <stop offset="0" stopColor="#b20000" />
        <stop offset=".1" stopColor="#bc0000" />
        <stop offset=".19" stopColor="#dc2020" />
        <stop offset=".24" stopColor="#dc2222" />
        <stop offset=".35" stopColor="#bc0000" />
        <stop offset=".7" stopColor="#b20000" />
        <stop offset=".86" stopColor="#9c0000" />
        <stop offset="1" stopColor="#780000" />
      </linearGradient>
    </defs>
    <path d="M526.8 330.1L548.3 308.6A237 180.5 45.8 0 1 878.7 648.4L857.2 669.9Z" fill="url(#rim)" stroke="#000" />
    <ellipse cx="692" cy="500" rx="237" ry="180.5" transform="rotate(45.8 692 500)" fill="#640000" stroke="#000" />
  </svg>
);

const Viewport = () => (
  <section className="flex flex-1 flex-col min-w-0">
    <div className="flex items-center justify-end pt-[5px] pr-[17px] opacity-75">
      {viewTools.map(({ label, icon: Icon, menu }) => (
        <div key={label} className={clsx("flex", !menu && "mr-[6px]")}>
          <button type="button" aria-label={label}>
            <Icon />
          </button>
          {menu && (
            <button type="button" aria-label={`${label} menüsü`} className="flex w-5 items-center justify-center">
              <Caret className="text-[#777]" />
            </button>
          )}
        </div>
      ))}
    </div>
    <Disk />
  </section>
);

export default function App() {
  return (
    <div className="flex flex-col min-h-screen overflow-hidden font-['Noto_Sans',sans-serif] text-[#1a1a1a]">
      <Header />
      <Ribbon />
      <main className="flex flex-1 flex-col bg-[linear-gradient(to_top,#ffffff_1%,rgba(255,255,255,0)_24%),linear-gradient(160deg,#ffffff_38%,#e2e5ef_57%,#d9dce8_74%)]">
        <Tabs />
        <div className="flex flex-1">
          <FeaturePanel />
          <Viewport />
        </div>
      </main>
    </div>
  );
}
